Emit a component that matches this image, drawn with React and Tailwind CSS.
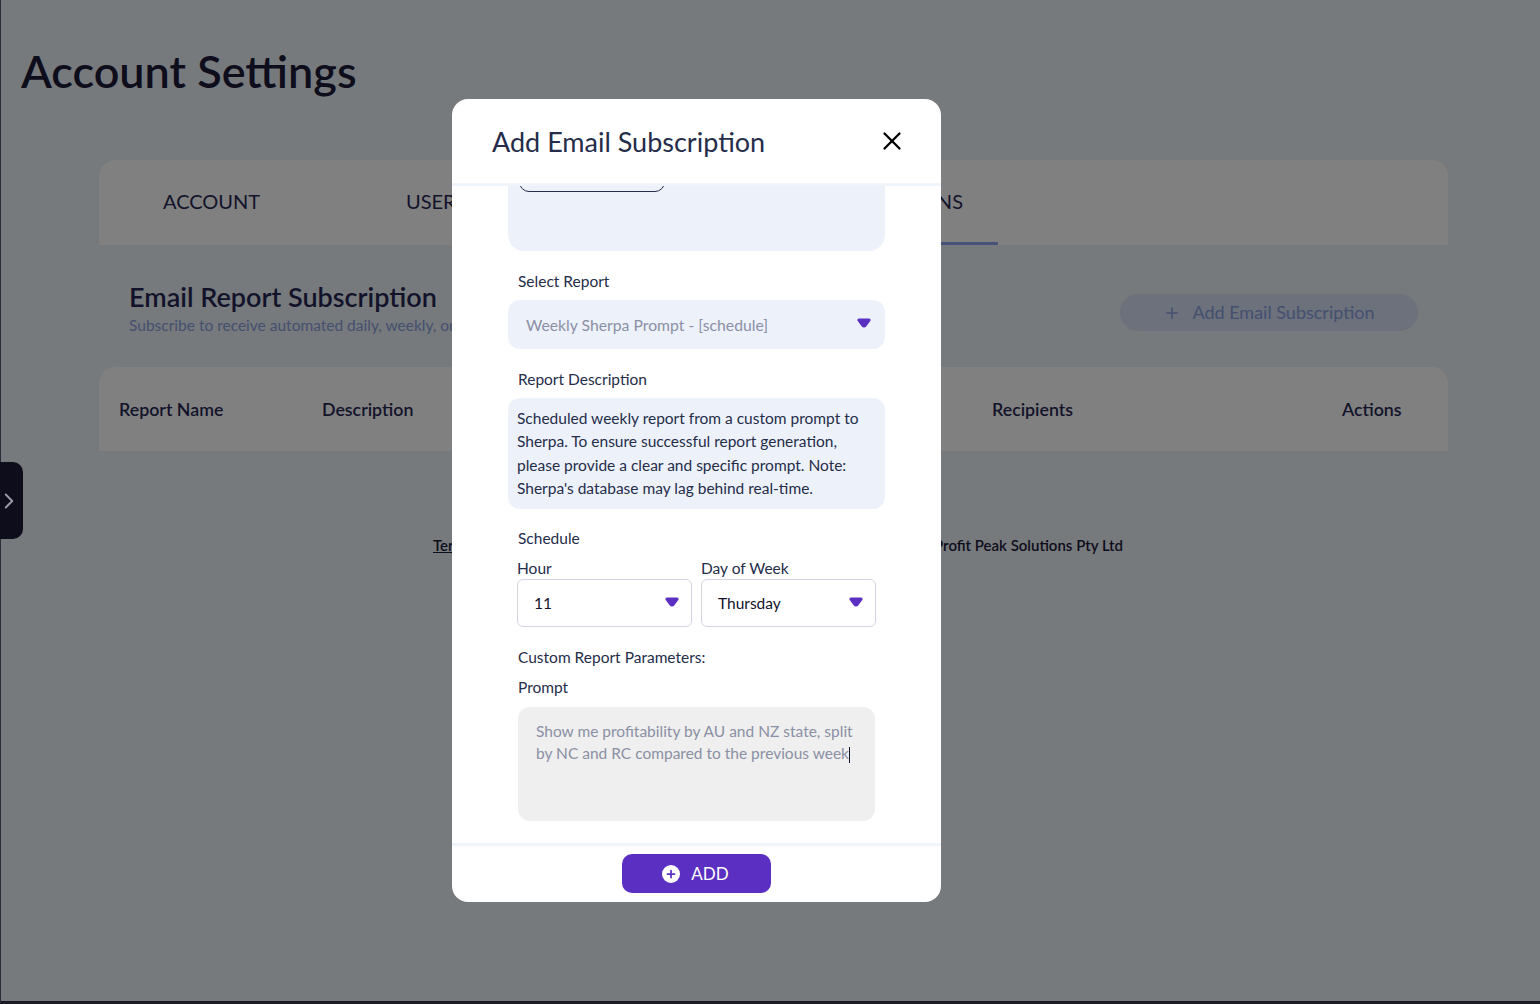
import { ChevronRight, Plus, X } from 'lucide-react';

const font = { fontFamily: 'Lato, "Noto Sans", sans-serif' };

function Caret({ className }) {
  return (
    <svg viewBox="0 0 14 10" className={`w-[14px] h-[10px] ${className}`}>
      <path d="M2 .5h10a1.6 1.6 0 0 1 1.3 2.5L9.2 8.4a2.8 2.8 0 0 1-4.4 0L.7 3A1.6 1.6 0 0 1 2 .5z" fill="#5a2fc2" />
    </svg>
  );
}

function Background() {
  return (
    <div className="h-[1004px] border-l border-l-[#2b2c38] border-b-[3px] border-b-[#1a1a24] overflow-hidden">
      <h1 className="pl-5 pt-[41px] text-[45px] leading-[60px] font-semibold text-[#0e0d1b]">Account Settings</h1>

      <div className="ml-[98px] w-[1349px] mt-[59px]">
        <div className="flex h-[85px] bg-[#808080] rounded-t-2xl text-[20px] text-[#12132a]">
          <div className="w-[225px] pl-16 pt-[26px]">ACCOUNT</div>
          <div className="w-[381px] pl-[82px] pt-[26px]">USERS</div>
          <div className="w-[293px] pt-[26px] border-b-[3px] border-[#46527a] text-right pr-[35px]">SUBSCRIPTIONS</div>
        </div>

        <div className="flex justify-between h-[122px] px-[30px] pt-[35px]">
          <div>
            <h2 className="text-[27px] leading-[34px] font-semibold text-[#12132a]">Email Report Subscription</h2>
            <p className="mt-[2px] text-[15.5px] leading-[18px] text-[#454f70]">Subscribe to receive automated daily, weekly, or monthly reports</p>
          </div>
          <button className="w-[298px] h-[37px] mt-[14px] flex items-center justify-center gap-[11px] rounded-full bg-[#6c717c] text-[18px] text-[#454f70]">
            <Plus size={18} />
            Add Email Subscription
          </button>
        </div>

        <div className="grid grid-cols-[203px_670px_350px_auto] items-center h-[84px] px-5 bg-[#808080] rounded-t-2xl text-[17.8px] font-semibold text-[#12132a]">
          <div>Report Name</div>
          <div>Description</div>
          <div>Recipients</div>
          <div>Actions</div>
        </div>

        <div className="flex justify-between ml-[334px] w-[690px] mt-[83px] text-[15px] font-semibold text-[#0e0d1b]">
          <span className="underline">Terms</span>
          <span>© 2024 Profit Peak Solutions Pty Ltd</span>
        </div>
      </div>
    </div>
  );
}

function Modal() {
  return (
    <div className="w-[489px] h-[803px] bg-white rounded-2xl overflow-hidden flex flex-col text-[#252d4a]">
      <div className="h-[87px] shrink-0 border-b-[3px] border-[#f0f4fb] flex items-center justify-between pl-10 pr-[34px]">
        <h3 className="text-[27px] pt-[2px]">Add Email Subscription</h3>
        <X size={30} strokeWidth={1.8} className="text-black" />
      </div>

      <div className="flex-1 overflow-hidden px-14 text-[15.5px]">
        <div className="h-[65px] bg-[#edf2fa] rounded-b-2xl overflow-hidden">
          <div className="ml-[11px] w-[146px] h-[20px] -mt-[14px] border border-[#252d4a] rounded-2xl" />
        </div>

        <label className="block ml-[10px] mt-[20px] h-[29px] leading-[20px]">Select Report</label>
        <div className="h-[49px] bg-[#edf2fa] rounded-xl flex items-center justify-between pl-[18px] pr-[14px]">
          <span className="text-[15.75px] text-[#8a90a5]">Weekly Sherpa Prompt - [schedule]</span>
          <Caret className="-mt-[3px]" />
        </div>

        <label className="block ml-[10px] mt-[20px] h-[29px] leading-[20px]">Report Description</label>
        <div className="h-[111px] bg-[#edf2fa] rounded-xl px-[9px] py-[9px] leading-[23.3px]">
          Scheduled weekly report from a custom prompt to Sherpa. To ensure successful report generation, please provide a clear and specific prompt. Note: Sherpa's database may lag behind real-time.
        </div>

        <label className="block ml-[10px] mt-[19px] h-[31px] leading-[20px]">Schedule</label>
        <div className="flex gap-[9px] ml-[9px]">
          <div className="w-[175px]">
            <div className="h-[20px] leading-[19px]">Hour</div>
            <div className="h-[48px] border border-[#d4d4e0] rounded-md flex items-center justify-between pl-4 pr-3 text-[#12132a]">
              <span className="pt-[2px]">11</span>
              <Caret className="-mt-[3px]" />
            </div>
          </div>
          <div className="w-[175px]">
            <div className="h-[20px] leading-[19px]">Day of Week</div>
            <div className="h-[48px] border border-[#d4d4e0] rounded-md flex items-center justify-between pl-4 pr-3 text-[#12132a]">
              <span className="pt-[2px]">Thursday</span>
              <Caret className="-mt-[3px]" />
            </div>
          </div>
        </div>

        <div className="ml-[10px] mt-[20px] h-[30px] leading-[20px]">Custom Report Parameters:</div>
        <div className="ml-[10px] h-[30px] leading-[20px]">Prompt</div>
        <div className="ml-[10px] w-[357px] h-[114px] bg-[#efefef] rounded-xl px-[18px] py-[13px] leading-[22px] text-[#8a90a5]">
          Show me profitability by AU and NZ state, split by NC and RC compared to the previous week
          <span className="inline-block w-px h-[16px] bg-[#12132a] align-middle" />
        </div>
      </div>

      <div className="h-[59px] shrink-0 border-t-[3px] border-[#f0f4fb] flex justify-center pt-2">
        <button className="w-[149px] h-[39px] bg-[#5a2fc2] rounded-[10px] flex items-center justify-center gap-[11px] pr-[2px] text-white text-[17px]">
          <span className="w-[18px] h-[18px] rounded-full bg-white flex items-center justify-center">
            <Plus size={12} strokeWidth={3.5} className="text-[#5a2fc2]" />
          </span>
          ADD
        </button>
      </div>
    </div>
  );
}

export default function App() {
  return (
    <div className="relative h-[1004px] bg-[#767a7c] overflow-hidden" style={font}>
      <Background />
      <div className="absolute left-0 top-[462px] w-[23px] h-[77px] bg-[#0e0d1b] rounded-r-[10px] flex items-center">
        <ChevronRight size={26} strokeWidth={1.8} className="shrink-0 -ml-[4px] text-[#9a9aa6]" />
      </div>
      <div className="absolute inset-0 pl-[452px] pt-[99px]">
        <Modal />
      </div>
    </div>
  );
}
